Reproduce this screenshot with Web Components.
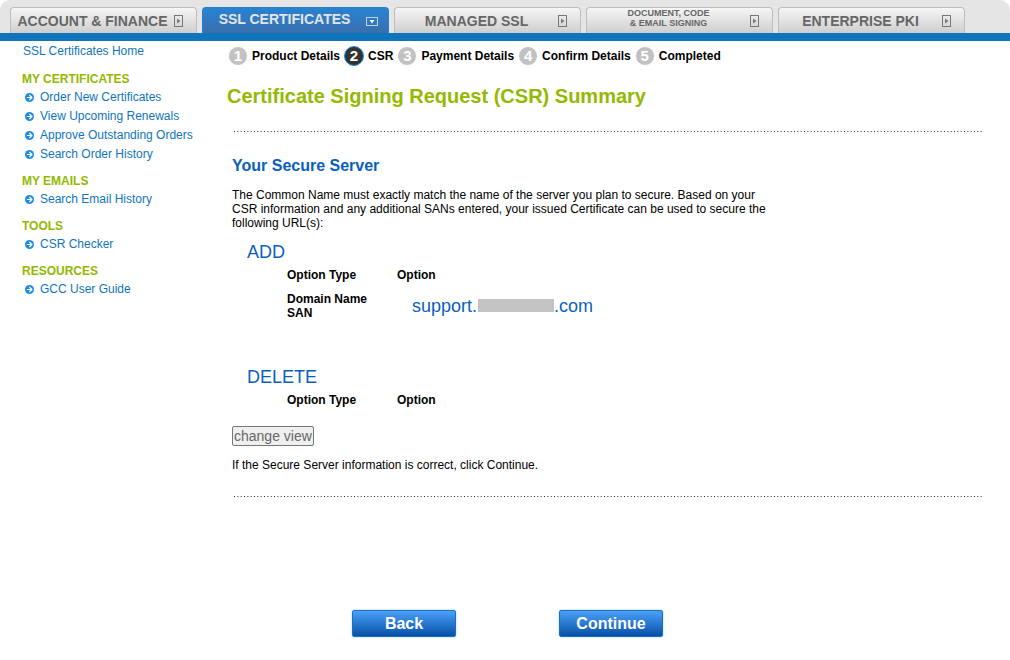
<!DOCTYPE html>
<html lang="en">
<head>
<meta charset="utf-8">
<title>Certificate Signing Request (CSR) Summary</title>
<style>
    body {
        margin: 0;
        background: #fff;
        color: #000;
        font: 12px/14px "Liberation Sans", Arial, sans-serif;
    }
</style>
</head>
<body>
<gcc-page>
    <gcc-tabs slot="header">
        <gcc-tab>ACCOUNT &amp; FINANCE</gcc-tab>
        <gcc-tab active>SSL CERTIFICATES</gcc-tab>
        <gcc-tab>MANAGED SSL</gcc-tab>
        <gcc-tab small>DOCUMENT, CODE<br>&amp; EMAIL SIGNING</gcc-tab>
        <gcc-tab>ENTERPRISE PKI</gcc-tab>
    </gcc-tabs>

    <gcc-sidebar slot="sidebar">
        <gcc-menu heading="MY CERTIFICATES">
            <gcc-menu-item>Order New Certificates</gcc-menu-item>
            <gcc-menu-item>View Upcoming Renewals</gcc-menu-item>
            <gcc-menu-item>Approve Outstanding Orders</gcc-menu-item>
            <gcc-menu-item>Search Order History</gcc-menu-item>
        </gcc-menu>
        <gcc-menu heading="MY EMAILS">
            <gcc-menu-item>Search Email History</gcc-menu-item>
        </gcc-menu>
        <gcc-menu heading="TOOLS">
            <gcc-menu-item>CSR Checker</gcc-menu-item>
        </gcc-menu>
        <gcc-menu heading="RESOURCES">
            <gcc-menu-item>GCC User Guide</gcc-menu-item>
        </gcc-menu>
    </gcc-sidebar>

    <gcc-steps>
        <gcc-step number="1">Product Details</gcc-step>
        <gcc-step number="2" current>CSR</gcc-step>
        <gcc-step number="3">Payment Details</gcc-step>
        <gcc-step number="4">Confirm Details</gcc-step>
        <gcc-step number="5">Completed</gcc-step>
    </gcc-steps>
    <csr-summary></csr-summary>
</gcc-page>

<script>
    class GccPage extends HTMLElement {
        connectedCallback() {
            this.attachShadow({ mode: 'open' });
            this.shadowRoot.innerHTML = `
                <style>
                    :host {
                        display: block;
                    }

                    .columns {
                        display: grid;
                        grid-template-columns: 227px 1fr;
                    }
                </style>
                <header><slot name="header"></slot></header>
                <div class="columns">
                    <slot name="sidebar"></slot>
                    <main><slot></slot></main>
                </div>
            `;
        }
    }

    class GccTabs extends HTMLElement {
        connectedCallback() {
            this.attachShadow({ mode: 'open' });
            this.shadowRoot.innerHTML = `
                <style>
                    :host {
                        display: block;
                    }

                    nav {
                        display: flex;
                        gap: 5px;
                        padding: 7px 10px 0;
                        background: #e5e5e5;
                        border-bottom: 8px solid #0f75bd;
                        border-radius: 10px 10px 0 0;
                    }
                </style>
                <nav><slot></slot></nav>
            `;
        }
    }

    class GccTab extends HTMLElement {
        connectedCallback() {
            const active = this.hasAttribute('active');
            const icon = active
                ? '<svg width="12" height="9" viewBox="0 0 12 9"><rect x=".5" y=".5" width="11" height="8"/><path d="M3.5 3h5L6 6.5z"/></svg>'
                : '<svg width="9" height="12" viewBox="0 0 9 12"><rect x=".5" y=".5" width="8" height="11"/><path d="M3 3.5v5L6.5 6z"/></svg>';
            this.attachShadow({ mode: 'open' });
            this.shadowRoot.innerHTML = `
                <style>
                    :host {
                        display: block;
                        flex: 0 1 187px;
                    }

                    a {
                        display: flex;
                        align-items: center;
                        box-sizing: border-box;
                        height: 26px;
                        padding: 0 13px 0 0;
                        border: 1px solid #bdbdbd;
                        border-width: 1px 1px 0;
                        border-radius: 4px 4px 0 0;
                        background: linear-gradient(#f6f6f6, #cecece);
                        color: #666;
                        font-size: 14px;
                        font-weight: bold;
                        text-align: center;
                        text-decoration: none;
                        white-space: nowrap;
                    }

                    span {
                        flex: 1;
                    }

                    svg {
                        fill: none;
                        stroke: #777;
                    }

                    path {
                        fill: #777;
                        stroke: none;
                    }

                    :host([active]) a {
                        border-color: #2a7fcd;
                        background: linear-gradient(#2783d2, #3a6fae);
                        color: #e5e5e5;
                        padding-bottom: 4px;
                        padding-right: 10px;
                    }

                    :host([active]) svg {
                        stroke: #b8d4ee;
                        margin-top: 6px;
                    }

                    :host([active]) path {
                        fill: #fff;
                    }

                    :host([small]) a {
                        font-size: 9px;
                        line-height: 10px;
                        padding-bottom: 5px;
                    }

                    :host([small]) svg {
                        margin-top: 5px;
                    }
                </style>
                <a href="#"><span><slot></slot></span>${icon}</a>
            `;
        }
    }

    class GccSidebar extends HTMLElement {
        connectedCallback() {
            this.attachShadow({ mode: 'open' });
            this.shadowRoot.innerHTML = `
                <style>
                    :host {
                        display: block;
                        padding-left: 22px;
                    }

                    a {
                        display: block;
                        margin: 0 0 9px 1px;
                        color: #0f75bd;
                        line-height: 20px;
                        text-decoration: none;
                    }
                </style>
                <a href="#">SSL Certificates Home</a>
                <slot></slot>
            `;
        }
    }

    class GccMenu extends HTMLElement {
        connectedCallback() {
            this.attachShadow({ mode: 'open' });
            this.shadowRoot.innerHTML = `
                <style>
                    :host {
                        display: block;
                        margin-bottom: 8px;
                    }

                    h3 {
                        margin: 0;
                        color: #93b900;
                        font-size: 12px;
                        line-height: 18px;
                    }
                </style>
                <h3>${this.getAttribute('heading')}</h3>
                <slot></slot>
            `;
        }
    }

    class GccMenuItem extends HTMLElement {
        connectedCallback() {
            this.attachShadow({ mode: 'open' });
            this.shadowRoot.innerHTML = `
                <style>
                    :host {
                        display: block;
                    }

                    a {
                        display: flex;
                        align-items: center;
                        gap: 6px;
                        padding-left: 3px;
                        color: #0f75bd;
                        line-height: 19px;
                        text-decoration: none;
                    }
                </style>
                <a href="#">
                    <svg width="9" height="9" viewBox="0 0 9 9">
                        <circle cx="4.5" cy="4.5" r="4.5" fill="#1f8be0"/>
                        <path d="M1.8 4.5h5M4.4 2l2.5 2.5L4.4 7" fill="none" stroke="#fff" stroke-width="1.2"/>
                    </svg>
                    <slot></slot>
                </a>
            `;
        }
    }

    class GccSteps extends HTMLElement {
        connectedCallback() {
            this.attachShadow({ mode: 'open' });
            this.shadowRoot.innerHTML = `
                <style>
                    :host {
                        display: flex;
                        gap: 4px;
                        padding: 5px 0 0 1px;
                    }
                </style>
                <slot></slot>
            `;
        }
    }

    class GccStep extends HTMLElement {
        connectedCallback() {
            this.attachShadow({ mode: 'open' });
            this.shadowRoot.innerHTML = `
                <style>
                    :host {
                        display: flex;
                        align-items: center;
                        gap: 4px;
                        font-weight: bold;
                        white-space: nowrap;
                    }

                    b {
                        box-sizing: border-box;
                        width: 20px;
                        height: 20px;
                        border: 1px solid #fff;
                        border-radius: 50%;
                        background: #c2c2c2;
                        color: #fff;
                        font-size: 15px;
                        line-height: 18px;
                        text-align: center;
                    }

                    :host([current]) b {
                        border-color: #1c8fdc;
                        background: #333;
                    }
                </style>
                <b>${this.getAttribute('number')}</b><span><slot></slot></span>
            `;
        }
    }

    class OptionTable extends HTMLElement {
        connectedCallback() {
            this.attachShadow({ mode: 'open' });
            this.shadowRoot.innerHTML = `
                <style>
                    :host {
                        display: block;
                        padding-left: 15px;
                    }

                    h3 {
                        margin: 0;
                        color: #0a5fbe;
                        font-size: 18px;
                        font-weight: normal;
                        line-height: 24px;
                    }

                    table {
                        margin: 4px 0 0 40px;
                        border-collapse: collapse;
                    }

                    th, td {
                        padding: 0;
                        text-align: left;
                    }

                    th {
                        width: 110px;
                    }

                    tbody th, tbody td {
                        padding-top: 10px;
                    }

                    tbody th {
                        padding-right: 20px;
                        width: 90px;
                    }

                    td {
                        padding-left: 15px;
                        color: #0a5fbe;
                        font-size: 18px;
                        white-space: nowrap;
                    }

                    i {
                        display: inline-block;
                        width: 76px;
                        height: 13px;
                        margin-left: 1px;
                        background: #c3c3c3;
                    }
                </style>
                <h3>${this.getAttribute('heading')}</h3>
                <table>
                    <thead><tr><th>Option Type</th><th>Option</th></tr></thead>
                    ${this.hasAttribute('domain') ? `<tbody><tr>
                        <th>Domain Name<br>SAN</th>
                        <td colspan="2">support.<i></i>.com</td>
                    </tr></tbody>` : ''}
                </table>
            `;
        }
    }

    class GccButton extends HTMLElement {
        connectedCallback() {
            this.attachShadow({ mode: 'open' });
            this.shadowRoot.innerHTML = `
                <style>
                    :host {
                        display: block;
                    }

                    button {
                        display: block;
                        width: 104px;
                        height: 27px;
                        padding: 0;
                        border: 1px solid #1e6fc0;
                        border-radius: 2px;
                        background: linear-gradient(#4aa0fa, #0751a6);
                        box-shadow: 0 0 2px #7cc4f5;
                        color: #fff;
                        font: bold 16px "Liberation Sans", Arial, sans-serif;
                    }
                </style>
                <button type="button"><slot></slot></button>
            `;
        }
    }

    class DottedRule extends HTMLElement {
        connectedCallback() {
            this.attachShadow({ mode: 'open' });
            // three dots every 10px, the second and third fall between pixels
            this.shadowRoot.innerHTML = `
                <style>
                    :host {
                        display: block;
                    }

                    hr {
                        height: 1px;
                        margin: 0;
                        border: 0;
                        background: repeating-linear-gradient(90deg,
                            transparent 0 1px, #333 1px 2px, transparent 2px 4px,
                            #777 4px 5px, #bbb 5px 6px, transparent 6px 7px,
                            #bbb 7px 8px, #777 8px 9px, transparent 9px 10px);
                    }
                </style>
                <hr>
            `;
        }
    }

    class CsrSummary extends HTMLElement {
        connectedCallback() {
            this.attachShadow({ mode: 'open' });
            this.shadowRoot.innerHTML = `
                <style>
                    :host {
                        display: block;
                    }

                    h1, h2, p {
                        margin: 0;
                    }

                    h1 {
                        padding: 18px 0 23px;
                        color: #93b900;
                        font-size: 20px;
                        line-height: 24px;
                    }

                    dotted-rule {
                        margin: 0 28px 0 6px;
                    }

                    section {
                        margin: 0 28px 0 5px;
                        padding: 24px 0;
                    }

                    h2 {
                        color: #0a5fbe;
                        font-size: 16px;
                        line-height: 20px;
                        margin-bottom: 12px;
                    }

                    .intro {
                        max-width: 540px;
                        margin-bottom: 10px;
                    }

                    .add {
                        min-height: 125px;
                    }

                    .view {
                        display: block;
                        margin: 19px 0 12px;
                        padding: 1px;
                        border: 1px solid #767676;
                        border-radius: 2px;
                        background: #efefef;
                        color: #666;
                        font: 14px/16px "Liberation Sans", Arial, sans-serif;
                    }

                    footer {
                        display: flex;
                        gap: 103px;
                        margin: 113px 0 23px 125px;
                    }
                </style>
                <h1>Certificate Signing Request (CSR) Summary</h1>
                <dotted-rule></dotted-rule>
                <section>
                    <h2>Your Secure Server</h2>
                    <p class="intro">The Common Name must exactly match the name of the server you plan to secure. Based on your CSR information and any additional SANs entered, your issued Certificate can be used to secure the following URL(s):</p>
                    <option-table class="add" heading="ADD" domain></option-table>
                    <option-table heading="DELETE"></option-table>
                    <button class="view" type="button">change view</button>
                    <p>If the Secure Server information is correct, click Continue.</p>
                </section>
                <dotted-rule></dotted-rule>
                <footer>
                    <gcc-button>Back</gcc-button>
                    <gcc-button>Continue</gcc-button>
                </footer>
            `;
        }
    }

    customElements.define('gcc-page', GccPage);
    customElements.define('gcc-tabs', GccTabs);
    customElements.define('gcc-tab', GccTab);
    customElements.define('gcc-sidebar', GccSidebar);
    customElements.define('gcc-menu', GccMenu);
    customElements.define('gcc-menu-item', GccMenuItem);
    customElements.define('gcc-steps', GccSteps);
    customElements.define('gcc-step', GccStep);
    customElements.define('option-table', OptionTable);
    customElements.define('gcc-button', GccButton);
    customElements.define('dotted-rule', DottedRule);
    customElements.define('csr-summary', CsrSummary);
</script>
</body>
</html>
